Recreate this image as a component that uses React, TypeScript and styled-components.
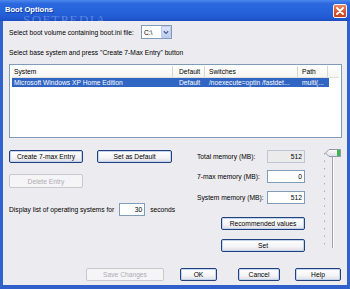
import styled, { createGlobalStyle } from 'styled-components';

const GlobalStyle = createGlobalStyle`
  html, body {
    margin: 0;
    padding: 0;
    background: #ffffff;
  }
  body {
    font-family: 'Liberation Sans', Arial, sans-serif;
    font-size: 6.7px;
    color: #000;
  }
`;

const columns = [
  { title: 'System', width: 161, pad: 2 },
  { title: 'Default', width: 32, pad: 6 },
  { title: 'Switches', width: 93, pad: 4 },
  { title: 'Path', width: 30, pad: 4 },
];

const entry = ['Microsoft Windows XP Home Edition', 'Default', '/noexecute=optin /fastdet...', 'multi(...'];

const memoryRows = [
  { label: 'Total memory (MB):', value: '512', disabled: true, gap: 0 },
  { label: '7-max memory (MB):', value: '0', disabled: false, gap: 7 },
  { label: 'System memory (MB):', value: '512', disabled: false, gap: 8 },
];

export default function App() {
  return (
    <>
      <GlobalStyle />
      <Window>
        <TitleBar>
          <TitleText>Boot Options</TitleText>
          <CloseButton>
            <svg width="8" height="8" viewBox="0 0 8 8">
              <path d="M1 1 L7 7 M7 1 L1 7" stroke="#fff" strokeWidth="1.8" strokeLinecap="round" />
            </svg>
          </CloseButton>
        </TitleBar>
        <Watermark>SOFTPEDIA</Watermark>
        <Body>
          <VolumeRow>
            <span>Select boot volume containing boot.ini file:</span>
            <Combo>
              <ComboValue>C:\</ComboValue>
              <ComboArrow>
                <svg width="6" height="5" viewBox="0 0 6 5">
                  <path d="M0.8 1.2 L3 3.4 L5.2 1.2" stroke="#4d6185" strokeWidth="1.3" fill="none" />
                </svg>
              </ComboArrow>
            </Combo>
          </VolumeRow>
          <Hint>Select base system and press "Create 7-Max Entry" button</Hint>
          <ListView>
            <ListHeader>
              {columns.map((c) => (
                <HeaderCell key={c.title} $w={c.width} $pad={c.pad}>
                  {c.title}
                </HeaderCell>
              ))}
            </ListHeader>
            <ListRow $selected>
              {columns.map((c, i) => (
                <Cell key={c.title} $w={c.width} $pad={c.pad}>
                  {entry[i]}
                </Cell>
              ))}
            </ListRow>
          </ListView>

          <Lower>
            <LeftCol>
              <ButtonRow>
                <Button $w={74}>Create 7-max Entry</Button>
                <Button $w={75}>Set as Default</Button>
              </ButtonRow>
              <DeleteButton $w={74} disabled>
                Delete Entry
              </DeleteButton>
              <TimeoutRow>
                <span>Display list of operating systems for</span>
                <TextBox $w={26}>30</TextBox>
                <span>seconds</span>
              </TimeoutRow>
            </LeftCol>

            <RightCol>
              {memoryRows.map((r) => (
                <MemoryRow key={r.label} $gap={r.gap}>
                  <MemoryLabel>{r.label}</MemoryLabel>
                  <TextBox $w={38} $disabled={r.disabled}>
                    {r.value}
                  </TextBox>
                </MemoryRow>
              ))}
              <WideButton $w={84} $top={13}>
                Recommended values
              </WideButton>
              <WideButton $w={84} $top={9}>
                Set
              </WideButton>
            </RightCol>

            <Slider>
              <svg width="18" height="100" viewBox="0 0 18 100">
                {Array.from({ length: 13 }).map((_, i) => (
                  <rect key={i} x="0" y={4 + i * 7.5} width="1" height="1.4" fill="#a7a7ab" />
                ))}
                <rect x="8" y="2" width="1" height="97" fill="#a4a4a8" />
                <rect x="9" y="2" width="1" height="97" fill="#ffffff" />
                <defs>
                  <linearGradient id="thumb" x1="0" y1="0" x2="0" y2="1">
                    <stop offset="0" stopColor="#ffffff" />
                    <stop offset="1" stopColor="#dcdce2" />
                  </linearGradient>
                </defs>
                <path d="M1.5 4 L5 0.5 L16.5 0.5 L16.5 7.5 L5 7.5 Z" fill="url(#thumb)" stroke="#8d99ad" strokeWidth="1" />
                <rect x="13" y="1" width="3" height="6" fill="#3cb54a" />
              </svg>
            </Slider>
          </Lower>

          <Footer>
            <Button $w={78} disabled>
              Save Changes
            </Button>
            <Button $w={37} $ml={16}>OK</Button>
            <Button $w={42} $ml={21}>Cancel</Button>
            <Button $w={46} $ml={15}>Help</Button>
          </Footer>
        </Body>
      </Window>
    </>
  );
}

const Window = styled.div`
  position: relative;
  width: 350px;
  height: 289px;
  display: flex;
  flex-direction: column;
  overflow: hidden;
`;

const TitleBar = styled.div`
  height: 21px;
  flex-shrink: 0;
  display: flex;
  align-items: center;
  justify-content: space-between;
  padding: 0 3px 0 5px;
  box-sizing: border-box;
  background: linear-gradient(
    to bottom,
    #4c88ec 0%,
    #2b67de 18%,
    #2561d9 60%,
    #2159d2 85%,
    #1c4ebf 100%
  );
`;

const TitleText = styled.span`
  color: #ffffff;
  font-weight: bold;
  font-size: 7.6px;
  line-height: 8px;
  margin-top: -1px;
  text-shadow: 1px 1px 0 #0f3a9a;
`;

const CloseButton = styled.div`
  width: 14px;
  height: 14px;
  box-sizing: border-box;
  border: 1px solid #f3f3f3;
  border-radius: 2px;
  background: linear-gradient(to bottom, #e88a64, #d4532c 60%, #c44520);
  display: flex;
  align-items: center;
  justify-content: center;
`;

const Watermark = styled.div`
  position: absolute;
  left: 23px;
  top: 15px;
  font-family: 'Liberation Serif', serif;
  font-size: 13px;
  line-height: 9px;
  height: 9px;
  letter-spacing: 1.5px;
  color: rgba(255, 255, 255, 0.28);
  pointer-events: none;
`;

const Body = styled.div`
  flex: 1;
  background: #ecebef;
  border-left: 3px solid #3163cf;
  border-right: 3px solid #3163cf;
  border-bottom: 4px solid #2f5fca;
  padding: 4px 5px 0 6px;
  display: flex;
  flex-direction: column;
`;

const VolumeRow = styled.div`
  height: 14px;
  display: flex;
  align-items: center;
  gap: 7px;
`;

const Combo = styled.div`
  width: 31px;
  height: 14px;
  box-sizing: border-box;
  border: 1px solid #7f9db9;
  background: #ffffff;
  display: flex;
  align-items: center;
`;

const ComboValue = styled.span`
  flex: 1;
  padding-left: 2px;
`;

const ComboArrow = styled.div`
  width: 10px;
  height: 12px;
  box-sizing: border-box;
  border: 1px solid #b9c9ef;
  border-radius: 1px;
  background: linear-gradient(to bottom, #dfe8fb, #bccdf3);
  display: flex;
  align-items: center;
  justify-content: center;
`;

const Hint = styled.div`
  margin-top: 9px;
  height: 10px;
  line-height: 10px;
`;

const ListView = styled.div`
  margin-top: 6px;
  width: 333px;
  height: 74px;
  box-sizing: border-box;
  border: 1px solid #7f9db9;
  background: #ffffff;
  padding: 1px 2px 0 2px;
`;

const ListHeader = styled.div`
  height: 11px;
  display: flex;
  border-bottom: 1px solid #e2e1da;
  background: linear-gradient(to bottom, #ffffff, #f6f5f1);
`;

const HeaderCell = styled.div<{ $w: number; $pad: number }>`
  width: ${({ $w }) => $w}px;
  box-sizing: border-box;
  padding-left: ${({ $pad }) => $pad}px;
  line-height: 11px;
  border-right: 1px solid #d8d7d0;
  white-space: nowrap;
  overflow: hidden;
`;

const ListRow = styled.div<{ $selected?: boolean }>`
  height: 9px;
  width: 317px;
  display: flex;
  background: ${({ $selected }) => ($selected ? '#3165c4' : 'transparent')};
  color: ${({ $selected }) => ($selected ? '#ffffff' : '#000000')};
`;

const Cell = styled.div<{ $w: number; $pad: number }>`
  width: ${({ $w }) => $w}px;
  box-sizing: border-box;
  padding-left: ${({ $pad }) => $pad}px;
  line-height: 9px;
  white-space: nowrap;
  overflow: hidden;
`;

const Lower = styled.div`
  margin-top: 12px;
  display: flex;
  align-items: flex-start;
`;

const LeftCol = styled.div`
  width: 187px;
  display: flex;
  flex-direction: column;
`;

const ButtonRow = styled.div`
  display: flex;
  gap: 14px;
`;

const Button = styled.button<{ $w: number; $ml?: number }>`
  width: ${({ $w }) => $w}px;
  height: 13px;
  margin-left: ${({ $ml }) => $ml ?? 0}px;
  padding: 0;
  box-sizing: border-box;
  font-family: inherit;
  font-size: 6.7px;
  color: #000000;
  border: 1px solid #21417e;
  border-radius: 2px;
  background: linear-gradient(to bottom, #ffffff 0%, #f4f4f6 60%, #dedde4 100%);
  box-shadow: inset 0 0 0 1px #c4d3ee;

  &:disabled {
    color: #aeadb3;
    border-color: #c9c8ce;
    background: #f5f4f6;
    box-shadow: none;
  }
`;

const DeleteButton = styled(Button)`
  margin-top: 11px;
  height: 14px;
`;

const TimeoutRow = styled.div`
  margin-top: 15px;
  height: 13px;
  display: flex;
  align-items: center;
  gap: 5px;
`;

const TextBox = styled.div<{ $w: number; $disabled?: boolean }>`
  width: ${({ $w }) => $w}px;
  height: 13px;
  box-sizing: border-box;
  border: 1px solid ${({ $disabled }) => ($disabled ? '#bcc5d3' : '#7f9db9')};
  background: ${({ $disabled }) => ($disabled ? '#ebebec' : '#ffffff')};
  text-align: right;
  padding-right: 2px;
  line-height: 11px;
`;

const RightCol = styled.div`
  width: 109px;
  display: flex;
  flex-direction: column;
  align-items: flex-end;
`;

const MemoryRow = styled.div<{ $gap: number }>`
  margin-top: ${({ $gap }) => $gap}px;
  width: 109px;
  display: flex;
  align-items: center;
  justify-content: space-between;
  padding-left: 1px;
  box-sizing: border-box;
`;

const MemoryLabel = styled.span`
  white-space: nowrap;
`;

const WideButton = styled(Button)<{ $top: number }>`
  margin-top: ${({ $top }) => $top}px;
`;

const Slider = styled.div`
  margin-left: 19px;
  margin-top: -1px;
  width: 18px;
  height: 100px;
`;

const Footer = styled.div`
  margin-top: 16px;
  padding-left: 77px;
  display: flex;
`;
